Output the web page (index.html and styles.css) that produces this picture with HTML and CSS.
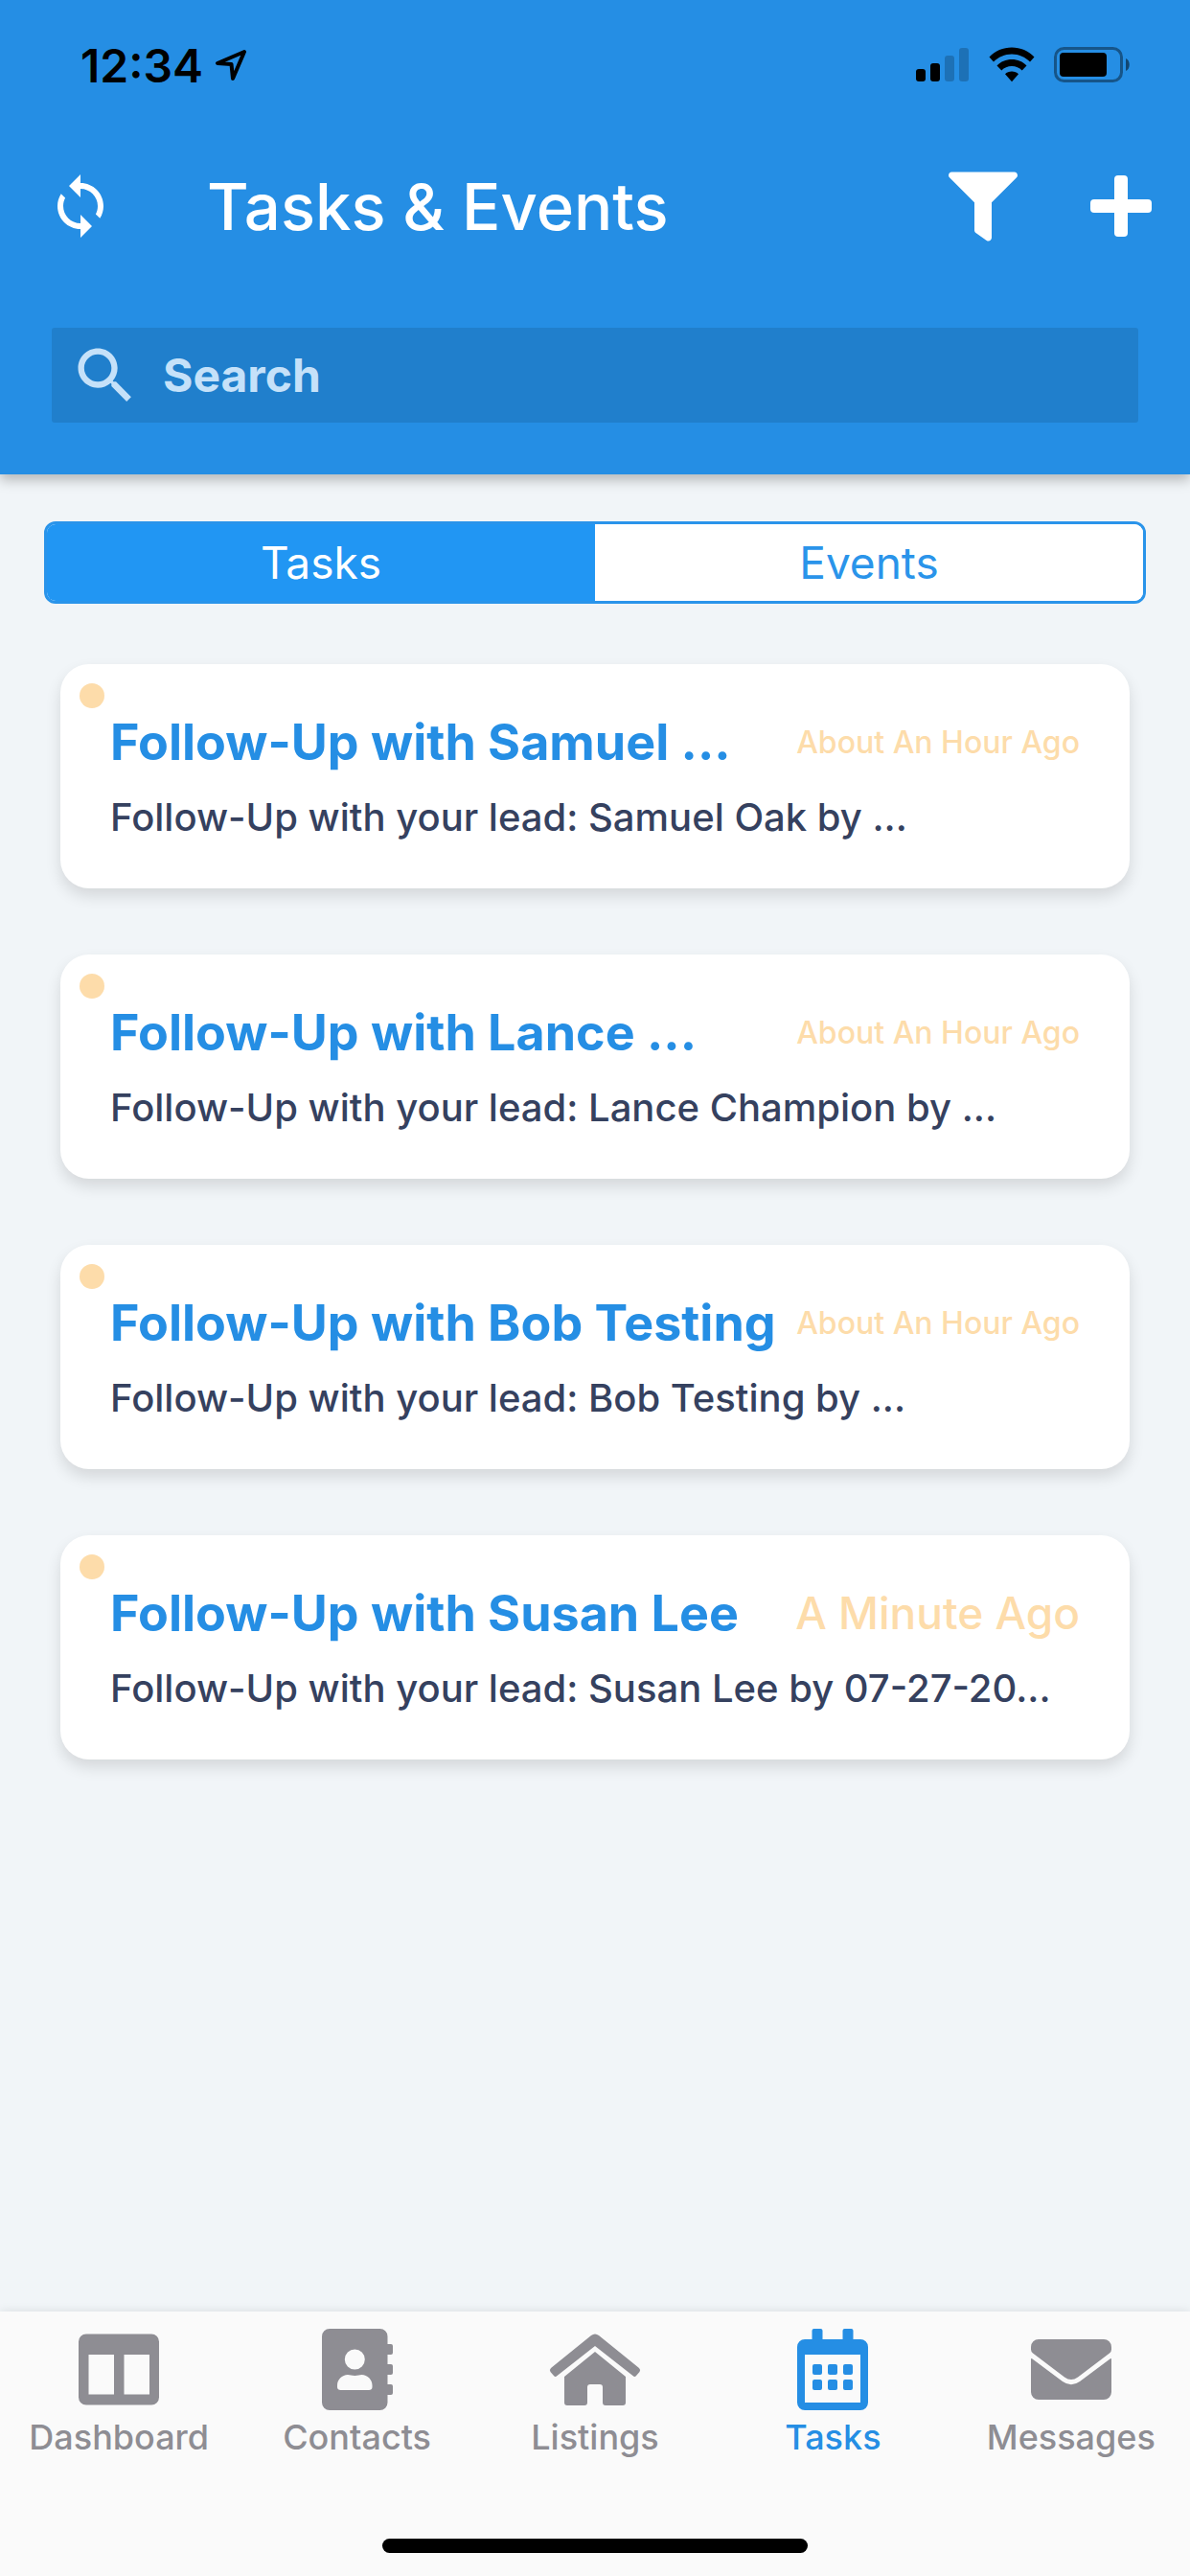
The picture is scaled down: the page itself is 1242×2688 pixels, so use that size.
FILE: index.html
```html
<!DOCTYPE html>
<html lang="en">
<head>
    <meta charset="UTF-8">
    <meta name="viewport" content="width=device-width, initial-scale=1.0">
    <title>Tasks &amp; Events</title>
    <link rel="stylesheet" href="styles.css">
</head>
<body>
    <header class="header">
        <div class="status-bar">
            <div class="status-time">
                <span>12:34</span>
                <svg width="38" height="38" viewBox="0 0 38 38" fill="none" stroke="#000" stroke-width="4" stroke-linejoin="round"><path d="M33 5L5 17l14.500 1L21 33z"/></svg>
            </div>
            <div class="status-icons">
                <svg width="56" height="38" viewBox="0 0 56 38">
                    <rect x="0" y="23" width="10" height="13" rx="3"/>
                    <rect x="15" y="17" width="10" height="19" rx="3"/>
                    <rect x="30" y="9" width="10" height="27" rx="3" opacity=".2"/>
                    <rect x="45" y="1" width="10" height="35" rx="3" opacity=".2"/>
                </svg>
                <svg width="48" height="38" viewBox="0 0 48 38">
                    <path d="M24 .500C15 .500 6.500 4 .500 10.500L5 15.500C10 10.500 16.500 7.500 24 7.500s14 3 19 8l4.500-5C41.500 4 33 .500 24 .500z"/>
                    <path d="M24 13c-6 0-11.500 2.300-15.500 6.500l4.800 5c2.800-2.800 6.500-4.500 10.700-4.500s7.900 1.700 10.700 4.500l4.800-5C35.500 15.300 30 13 24 13z"/>
                    <path d="M24 25.500c-2.800 0-5.200 1-7 2.700l7 8 7-8c-1.800-1.700-4.200-2.700-7-2.700z"/>
                </svg>
                <svg width="80" height="38" viewBox="0 0 80 38">
                    <rect x="1.500" y="1.500" width="69" height="34" rx="9" fill="none" stroke="#000" stroke-width="3" opacity=".4"/>
                    <rect x="6" y="6" width="49" height="25" rx="4"/>
                    <path d="M75 12c5 2 5 11 0 13z" opacity=".5"/>
                </svg>
            </div>
        </div>

        <div class="title-bar">
            <button class="icon-button" aria-label="Refresh">
                <svg width="72" height="72" viewBox="0 0 24 24" fill="currentColor"><path d="M12 4V1L8 5l4 4V6c3.310 0 6 2.690 6 6 0 1.010-.25 1.970-.7 2.800l1.460 1.460C19.540 15.030 20 13.570 20 12c0-4.420-3.580-8-8-8zm0 14c-3.310 0-6-2.690-6-6 0-1.010.25-1.970.7-2.800L5.240 7.740C4.460 8.970 4 10.430 4 12c0 4.420 3.580 8 8 8v3l4-4-4-4v3z"/></svg>
            </button>
            <h1 class="title">Tasks &amp; Events</h1>
            <button class="icon-button" aria-label="Filter">
                <svg width="72" height="73" viewBox="0 0 512 512" fill="currentColor"><path d="M487.976 0H24.028C2.710 0-8.047 25.866 7.058 40.971L192 225.941V432c0 7.831 3.821 15.170 10.237 19.662l80 55.980C298.020 518.690 320 507.493 320 487.980V225.941l184.947-184.970C520.021 25.896 509.338 0 487.976 0z"/></svg>
            </button>
            <button class="icon-button" aria-label="Add">
                <svg width="64" height="64" viewBox="0 0 64 64" fill="currentColor"><rect x="25" y="0" width="14" height="64" rx="4"/><rect x="0" y="25" width="64" height="14" rx="4"/></svg>
            </button>
        </div>

        <label class="search">
            <svg width="76" height="76" viewBox="0 0 24 24" fill="currentColor"><path d="M15.500 14h-.79l-.28-.27C15.410 12.590 16 11.110 16 9.500 16 5.910 13.090 3 9.500 3S3 5.910 3 9.500 5.910 16 9.500 16c1.610 0 3.090-.59 4.230-1.570l.27.28v.79l5 4.990L20.490 19l-4.990-5zm-6 0C7.010 14 5 11.990 5 9.500S7.010 5 9.500 5 14 7.010 14 9.500 11.990 14 9.500 14z"/></svg>
            <input type="text" class="search-input" placeholder="Search" aria-label="Search">
        </label>
    </header>

    <main class="content">
        <div class="segments">
            <button class="segment active">Tasks</button>
            <button class="segment">Events</button>
        </div>

        <div class="task-list">
            <article class="card">
                <span class="dot"></span>
                <div class="card-top">
                    <h2 class="card-title">Follow-Up with Samuel ...</h2>
                    <span class="card-time">About An Hour Ago</span>
                </div>
                <p class="card-text">Follow-Up with your lead: Samuel Oak by ...</p>
            </article>
            <article class="card">
                <span class="dot"></span>
                <div class="card-top">
                    <h2 class="card-title">Follow-Up with Lance ...</h2>
                    <span class="card-time">About An Hour Ago</span>
                </div>
                <p class="card-text">Follow-Up with your lead: Lance Champion by ...</p>
            </article>
            <article class="card">
                <span class="dot"></span>
                <div class="card-top">
                    <h2 class="card-title">Follow-Up with Bob Testing</h2>
                    <span class="card-time">About An Hour Ago</span>
                </div>
                <p class="card-text">Follow-Up with your lead: Bob Testing by ...</p>
            </article>
            <article class="card">
                <span class="dot"></span>
                <div class="card-top">
                    <h2 class="card-title">Follow-Up with Susan Lee</h2>
                    <span class="card-time large">A Minute Ago</span>
                </div>
                <p class="card-text">Follow-Up with your lead: Susan Lee by 07-27-20...</p>
            </article>
        </div>
    </main>

    <footer class="footer">
        <nav class="tabs">
            <a href="#dashboard" class="tab">
                <svg width="84" height="85" viewBox="0 0 84 85" fill="currentColor" fill-rule="evenodd"><path d="M8 5.500h68a8 8 0 0 1 8 8v58a8 8 0 0 1-8 8H8a8 8 0 0 1-8-8v-58a8 8 0 0 1 8-8zM10.500 27v41.500H37V27zm37 0v41.500H74V27z"/></svg>
                <span>Dashboard</span>
            </a>
            <a href="#contacts" class="tab">
                <svg width="74" height="85" viewBox="0 0 74 85" fill="currentColor" fill-rule="evenodd"><path d="M8 0h52.500a8 8 0 0 1 8 8v8H72a2 2 0 0 1 2 2v7a2 2 0 0 1-2 2h-3.500v10H72a2 2 0 0 1 2 2v7a2 2 0 0 1-2 2h-3.500v10H72a2 2 0 0 1 2 2v7a2 2 0 0 1-2 2h-3.500v8a8 8 0 0 1-8 8H8a8 8 0 0 1-8-8V8a8 8 0 0 1 8-8zm26.300 21.500a10.500 10.500 0 1 0 0 21 10.500 10.500 0 0 0 0-21zM27 48c-6 0-11 5-11 11v2c0 1.700 1.500 3 3.500 3H49c2 0 3.500-1.300 3.500-3v-2c0-6-5-11-11-11-2.500 0-4 1-7.200 1S29.500 48 27 48z"/></svg>
                <span>Contacts</span>
            </a>
            <a href="#listings" class="tab">
                <svg width="96" height="85" viewBox="0 0 96 85" fill="currentColor"><path d="M44 7Q48 4 52 7L94 41Q96 43 94.500 45L91 49Q89.500 51 87.500 49L48 18 8.500 49Q6.500 51 5 49L1.500 45Q0 43 2 41z"/><path d="M48 24l32 26v27a3 3 0 0 1-3 3H59a3 3 0 0 1-3-3V61a3 3 0 0 0-3-3H43a3 3 0 0 0-3 3v16a3 3 0 0 1-3 3H19a3 3 0 0 1-3-3V50z"/></svg>
                <span>Listings</span>
            </a>
            <a href="#tasks" class="tab active">
                <svg width="74" height="85" viewBox="0 0 74 85" fill="currentColor" fill-rule="evenodd"><path d="M17.500 0h7A2 2 0 0 1 26.500 2v9h21V2a2 2 0 0 1 2-2h7a2 2 0 0 1 2 2v9H66a8 8 0 0 1 8 8v58a8 8 0 0 1-8 8H8a8 8 0 0 1-8-8V19a8 8 0 0 1 8-8h7.500V2a2 2 0 0 1 2-2zM8 27v50h58V27z"/><rect x="16" y="37" width="10" height="11" rx="2"/><rect x="32" y="37" width="10" height="11" rx="2"/><rect x="48" y="37" width="10" height="11" rx="2"/><rect x="16" y="53" width="10" height="11" rx="2"/><rect x="32" y="53" width="10" height="11" rx="2"/><rect x="48" y="53" width="10" height="11" rx="2"/></svg>
                <span>Tasks</span>
            </a>
            <a href="#messages" class="tab">
                <svg width="84" height="85" viewBox="0 0 84 85" fill="currentColor"><path d="M8 11h68a8 8 0 0 1 8 8v2.500q0 2.500-2 4L49 50.500q-7 5-14 0L2 25.500q-2-1.500-2-4V19a8 8 0 0 1 8-8z"/><path d="M0 32q0-1.500 1.500-.5L33 55q9 6.500 18 0L82.500 31.500q1.500-1 1.500.5v34a8 8 0 0 1-8 8H8a8 8 0 0 1-8-8z"/></svg>
                <span>Messages</span>
            </a>
        </nav>
        <div class="home-indicator"></div>
    </footer>
</body>
</html>
```
FILE: styles.css
```css
* {
    box-sizing: border-box;
}

body {
    margin: 0;
    min-height: 100vh;
    display: flex;
    flex-direction: column;
    font-family: Inter, "Liberation Sans", sans-serif;
    background-color: #f1f5f8;
}

button {
    font-family: inherit;
    border: none;
    padding: 0;
    cursor: pointer;
}

svg {
    display: block;
    flex-shrink: 0;
}

/* Header */
.header {
    padding-bottom: 54px;
    background-color: #258ee4;
    box-shadow: 0 6px 12px rgba(0, 0, 0, 0.25);
}

.status-bar {
    display: flex;
    justify-content: space-between;
    align-items: center;
    height: 136px;
    padding: 0 62px 0 84px;
}

.status-time {
    display: flex;
    align-items: center;
    gap: 10px;
    font-size: 48px;
    font-weight: 600;
}

.status-icons {
    display: flex;
    gap: 20px;
}

.title-bar {
    display: flex;
    align-items: center;
    height: 158px;
    padding: 0 40px 0 48px;
}

.title {
    flex-grow: 1;
    margin: 0 0 0 96px;
    font-size: 67px;
    font-weight: 500;
    color: #fff;
}

.icon-button {
    background: none;
    color: #fff;
}

.icon-button + .icon-button {
    margin-left: 76px;
}

.search {
    display: flex;
    align-items: center;
    gap: 22px;
    height: 99px;
    margin: 48px 54px 0;
    padding: 0 18px;
    border-radius: 3px;
    background-color: #207fcc;
    color: #c5e1f9;
}

.search-input {
    flex-grow: 1;
    min-width: 0;
    padding: 0;
    border: none;
    outline: none;
    background: none;
    font-family: inherit;
    font-size: 48px;
    font-weight: 700;
    color: #fff;
}

.search-input::placeholder {
    color: #c5e1f9;
    opacity: 1;
}

/* Content */
.content {
    flex-grow: 1;
    padding: 49px 46px;
}

.segments {
    display: flex;
    height: 86px;
    border: 3px solid #2a94ea;
    border-radius: 12px;
    background-color: #fff;
    overflow: hidden;
}

.segment {
    flex: 1;
    background-color: #fff;
    color: #2a94ea;
    font-size: 46px;
}

.segment.active {
    background-color: #2196f3;
    color: #fff;
}

.task-list {
    display: flex;
    flex-direction: column;
    gap: 69px;
    padding: 63px 17px;
}

.card {
    position: relative;
    height: 234px;
    padding: 50px 52px 0;
    border-radius: 30px;
    background-color: #fff;
    box-shadow: 0 8px 16px rgba(0, 0, 0, 0.12);
}

.dot {
    position: absolute;
    top: 20px;
    left: 20px;
    width: 26px;
    height: 26px;
    border-radius: 50%;
    background-color: #fddcaa;
}

.card-top {
    display: flex;
    justify-content: space-between;
    align-items: center;
    height: 62px;
}

.card-title {
    margin: 0;
    font-size: 52px;
    font-weight: 700;
    color: #258ee4;
    white-space: nowrap;
}

.card-time {
    font-size: 32px;
    font-weight: 500;
    color: #fddcaa;
    white-space: nowrap;
}

.card-time.large {
    font-size: 46px;
}

.card-text {
    margin: 23px 0 0;
    font-size: 40px;
    font-weight: 500;
    line-height: 50px;
    color: #35415f;
    white-space: nowrap;
}

/* Bottom tabs */
.footer {
    background-color: #fafafa;
    box-shadow: 0 0 10px rgba(0, 0, 0, 0.1);
}

.tabs {
    display: flex;
    padding-top: 18px;
}

.tab {
    flex: 1;
    display: flex;
    flex-direction: column;
    align-items: center;
    gap: 6px;
    font-size: 36px;
    font-weight: 500;
    line-height: 44px;
    color: #8e8d93;
    text-decoration: none;
}

.tab.active {
    color: #258ee4;
}

.home-indicator {
    width: 444px;
    height: 15px;
    margin: 84px auto 24px;
    border-radius: 8px;
    background-color: #000;
}
```
